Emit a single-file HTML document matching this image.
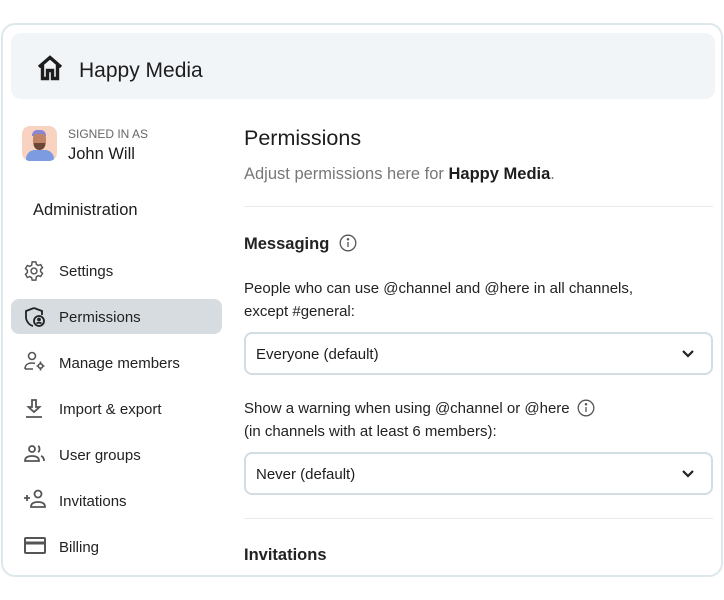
<!DOCTYPE html>
<html><head><meta charset="utf-8"><style>
*{margin:0;padding:0;box-sizing:border-box}
body{width:724px;height:600px;background:#fff;font-family:"Liberation Sans",sans-serif;color:#1d1d1d;position:relative;overflow:hidden}
.a{position:absolute;white-space:nowrap}
.card{left:1px;top:23px;width:722px;height:554px;border:2px solid #dde8ec;border-radius:14px}
.hdr{left:11px;top:33px;width:704px;height:66px;background:#f1f5f8;border-radius:10px}
.nav{font-size:15px;color:#222;top:1px}
.ic{position:absolute;left:23px}
.sel{left:11px;top:299px;width:211px;height:35px;background:#d6dcdf;border-radius:8px}
.dd{left:244px;width:469px;height:43px;border:2px solid #d2dde3;border-radius:8px;font-size:15px;padding:12px 0 0 10px}
.lbl{font-size:15px;color:#222;line-height:23px}
.hr{left:244px;width:469px;height:1px;background:#e6ecef}
</style></head><body>
<div class="a card"></div>
<div class="a hdr"></div>
<svg class="a" style="left:36px;top:55px" width="28" height="26" viewBox="0 0 28 26"><path d="M3 12 L14 2.5 L25 12 M6.5 10 V23.5 H11.5 V15.5 H16.5 V23.5 H21.5 V10" fill="none" stroke="#1d1d1d" stroke-width="3.4" stroke-linejoin="miter"/></svg>
<div class="a" style="left:79px;top:59px;font-size:21px;color:#1d1d1d">Happy Media</div>
<div class="a" style="left:22px;top:126px;width:35px;height:35px;border-radius:8px;background:#f9d3c1;overflow:hidden">
<div style="position:absolute;left:10px;top:4px;width:14px;height:6px;background:#8a86d6;border-radius:5px 5px 0 0"></div>
<div style="position:absolute;left:11px;top:8px;width:13px;height:15px;background:#c08466;border-radius:4px 4px 6px 6px"></div>
<div style="position:absolute;left:12px;top:17px;width:11px;height:7px;background:#6b4535;border-radius:0 0 5px 5px"></div>
<div style="position:absolute;left:4px;top:24px;width:28px;height:14px;background:#7c9be0;border-radius:9px 9px 0 0"></div>
</div>
<div class="a" style="left:68px;top:127px;font-size:12px;color:#666">SIGNED IN AS</div>
<div class="a" style="left:68px;top:145px;font-size:16.5px;color:#1d1d1d">John Will</div>
<div class="a" style="left:33px;top:201px;font-size:16.5px;color:#1d1d1d">Administration</div>
<div class="a sel"></div>
<svg class="ic" style="top:260px" width="22" height="22" viewBox="0 0 24 24" fill="none" stroke="#555" stroke-width="1.6"><circle cx="12" cy="12" r="3.2"/><path d="M10 2h4l.6 2.8 2 1.1 2.7-.9 2 3.4-2.1 1.9v2.4l2.1 1.9-2 3.4-2.7-.9-2 1.1L14 22h-4l-.6-2.8-2-1.1-2.7.9-2-3.4 2.1-1.9v-2.4L2.7 9.4l2-3.4 2.7.9 2-1.1z"/></svg>
<div class="a nav" style="left:59px;top:263px">Settings</div>
<svg class="ic" style="top:305px" width="24" height="24" viewBox="0 0 24 24" fill="none" stroke="#222" stroke-width="1.8"><path d="M11 3 3 6v6c0 4 3 8 7 9"/><path d="M11 3l8 3v4"/><circle cx="16" cy="16" r="5"/><circle cx="16" cy="14.5" r="1" fill="#222"/><path d="M13.5 18.5c1-1 4-1 5 0"/></svg>
<div class="a nav" style="left:59px;top:309px">Permissions</div>
<svg class="ic" style="top:351px" width="24" height="22" viewBox="0 0 24 22" fill="none" stroke="#555" stroke-width="1.6"><circle cx="9" cy="5" r="3.5"/><path d="M2 18c0-4 3-6 7-6 1 0 2 .2 3 .5M2 18h8"/><circle cx="17.5" cy="15" r="2.2"/><path d="M17.5 10.5v2M17.5 17.5v2M13.5 15h2M19.5 15h2"/></svg>
<div class="a nav" style="left:59px;top:355px">Manage members</div>
<svg class="ic" style="top:397px" width="22" height="22" viewBox="0 0 22 22" fill="none" stroke="#555" stroke-width="1.8"><path d="M9 3v7H5.5l5.5 5 5.5-5H13V3zM3 20h16"/></svg>
<div class="a nav" style="left:59px;top:401px">Import &amp; export</div>
<svg class="ic" style="top:443px" width="24" height="22" viewBox="0 0 24 22" fill="none" stroke="#555" stroke-width="1.8"><circle cx="9" cy="6" r="3"/><path d="M2 18c0-4 3-5 7-5s7 1 7 5zM15 3c2 .5 2 5.5 0 6M18 13c2 .5 3 2 3 5"/></svg>
<div class="a nav" style="left:59px;top:447px">User groups</div>
<svg class="ic" style="top:489px" width="26" height="22" viewBox="0 0 26 22" fill="none" stroke="#555" stroke-width="1.8"><path d="M1 9h6M4 6v6"/><circle cx="15" cy="5" r="3.5"/><path d="M8 18c0-4 3-5 7-5s7 1 7 5z"/></svg>
<div class="a nav" style="left:59px;top:493px">Invitations</div>
<svg class="ic" style="top:535px" width="24" height="22" viewBox="0 0 24 22" fill="none" stroke="#555" stroke-width="2"><rect x="2" y="3" width="20" height="15" rx="1"/><path d="M2 8h20" stroke-width="3"/></svg>
<div class="a nav" style="left:59px;top:539px">Billing</div>

<div class="a" style="left:244px;top:126px;font-size:21.5px;color:#1d1d1d">Permissions</div>
<div class="a" style="left:244px;top:165px;font-size:16.5px;color:#777">Adjust permissions here for <b style="color:#1d1d1d">Happy Media</b>.</div>
<div class="a hr" style="top:206px"></div>
<div class="a" style="left:244px;top:235px;font-size:16.5px;font-weight:bold;color:#222">Messaging</div>
<svg class="a" style="left:339px;top:234px" width="18" height="18" viewBox="0 0 18 18" fill="none" stroke="#555" stroke-width="1.3"><circle cx="9" cy="9" r="7.8"/><path d="M9 8v5"/><circle cx="9" cy="5.3" r=".6" fill="#555"/></svg>
<div class="a lbl" style="left:244px;top:277px">People who can use @channel and @here in all channels,<br>except #general:</div>
<div class="a dd" style="top:332px">Everyone (default)</div>
<svg class="a" style="left:681px;top:349px" width="14" height="10" viewBox="0 0 14 10" fill="none" stroke="#222" stroke-width="2.2"><path d="M2 2l5 5 5-5"/></svg>
<div class="a lbl" style="left:244px;top:397px">Show a warning when using @channel or @here<br>(in channels with at least 6 members):</div>
<svg class="a" style="left:577px;top:399px" width="18" height="18" viewBox="0 0 18 18" fill="none" stroke="#555" stroke-width="1.3"><circle cx="9" cy="9" r="7.8"/><path d="M9 8v5"/><circle cx="9" cy="5.3" r=".6" fill="#555"/></svg>
<div class="a dd" style="top:452px">Never (default)</div>
<svg class="a" style="left:681px;top:469px" width="14" height="10" viewBox="0 0 14 10" fill="none" stroke="#222" stroke-width="2.2"><path d="M2 2l5 5 5-5"/></svg>
<div class="a hr" style="top:518px"></div>
<div class="a" style="left:244px;top:546px;font-size:16.5px;font-weight:bold;color:#222">Invitations</div>
</body></html>
